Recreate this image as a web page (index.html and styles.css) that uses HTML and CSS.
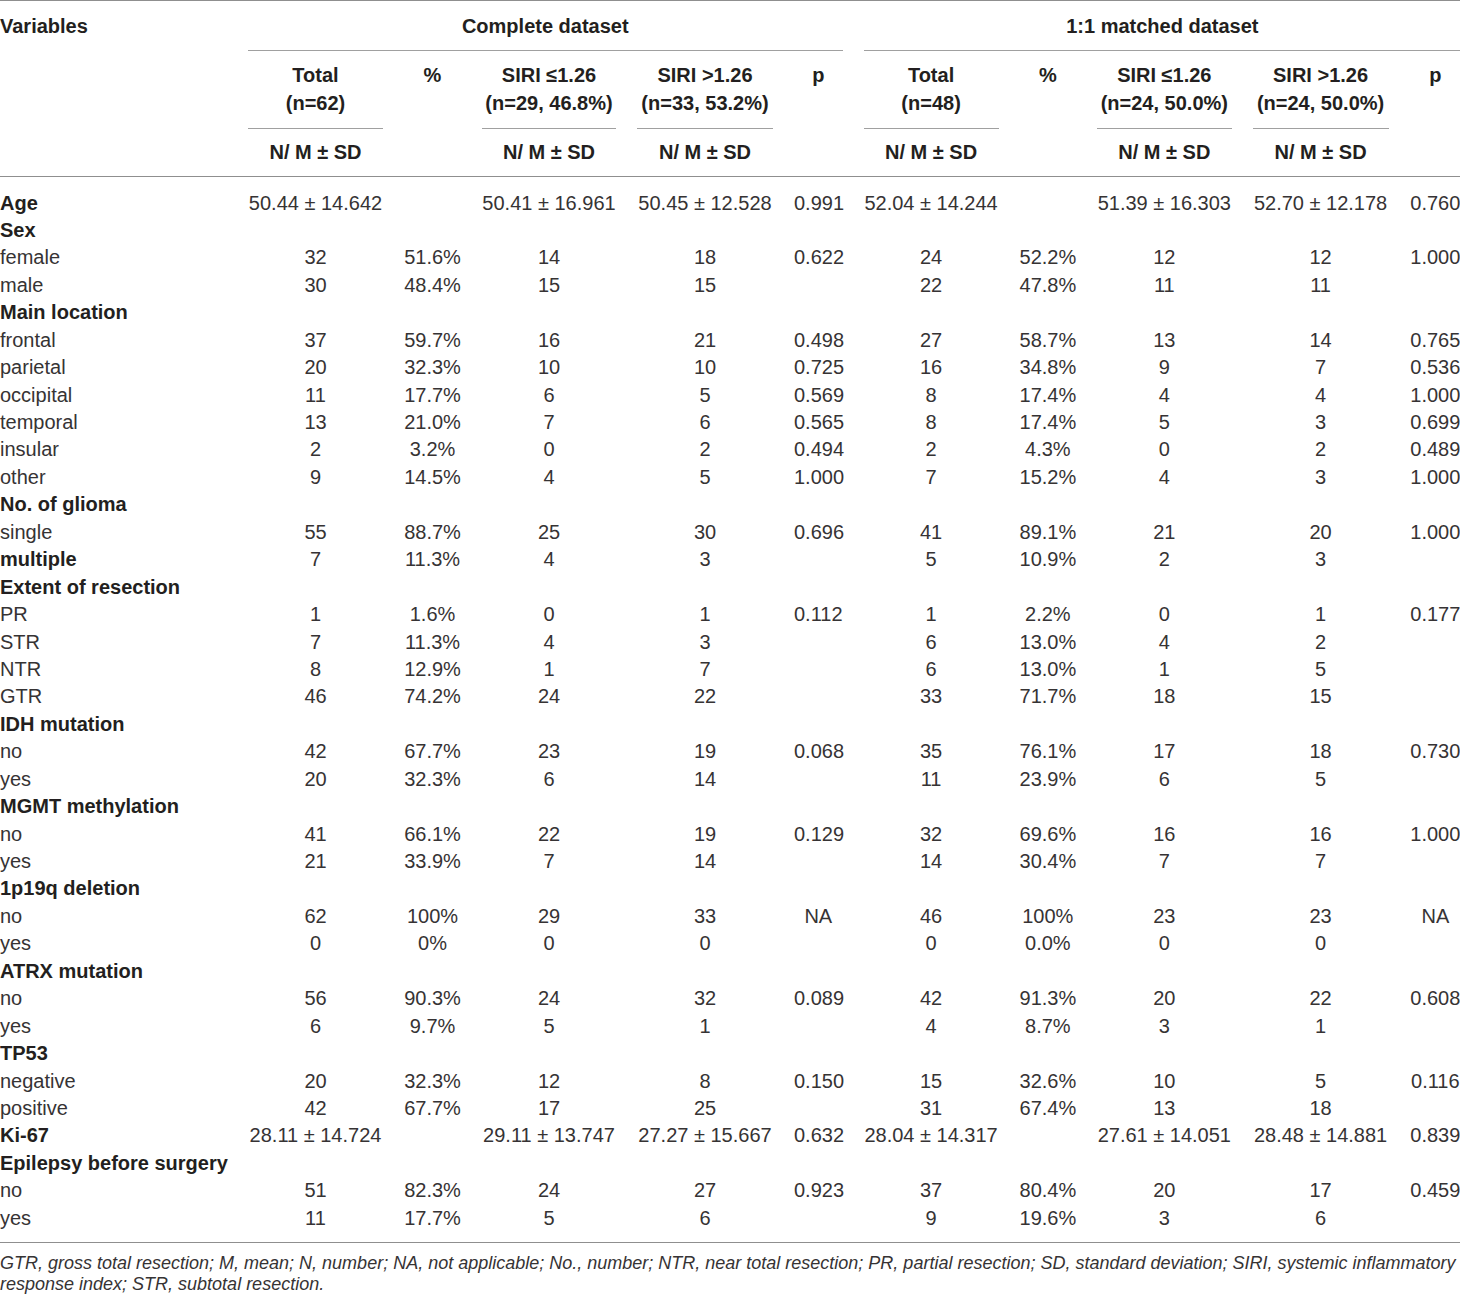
FILE: index.html
```html
<!DOCTYPE html>
<html lang="en">
<head>
<meta charset="utf-8">
<title>SIRI table</title>
<link rel="stylesheet" href="styles.css">
</head>
<body>
<table class="tbl">
  <colgroup>
    <col class="c-var">
    <col class="c-n">
    <col class="c-pct">
    <col class="c-siri1">
    <col class="c-siri2">
    <col class="c-p">
    <col class="c-n">
    <col class="c-pct2">
    <col class="c-siri3">
    <col class="c-siri2">
    <col class="c-p2">
  </colgroup>
  <thead>
    <tr class="h1">
      <th class="var">Variables</th>
      <th colspan="5"><div class="rule">Complete dataset</div></th>
      <th colspan="5"><div class="rule">1:1 matched dataset</div></th>
    </tr>
    <tr class="h2">
      <th></th>
      <th><div class="rule">Total<br>(n=62)</div></th>
      <th>%</th>
      <th><div class="rule">SIRI ≤1.26<br>(n=29, 46.8%)</div></th>
      <th><div class="rule">SIRI &gt;1.26<br>(n=33, 53.2%)</div></th>
      <th>p</th>
      <th><div class="rule">Total<br>(n=48)</div></th>
      <th>%</th>
      <th><div class="rule">SIRI ≤1.26<br>(n=24, 50.0%)</div></th>
      <th><div class="rule">SIRI &gt;1.26<br>(n=24, 50.0%)</div></th>
      <th>p</th>
    </tr>
    <tr class="h3">
      <th></th>
      <th>N/ M ± SD</th>
      <th></th>
      <th>N/ M ± SD</th>
      <th>N/ M ± SD</th>
      <th></th>
      <th>N/ M ± SD</th>
      <th></th>
      <th>N/ M ± SD</th>
      <th>N/ M ± SD</th>
      <th></th>
    </tr>
  </thead>
  <tbody>
    <tr><td class="var b">Age</td><td>50.44 ± 14.642</td><td></td><td>50.41 ± 16.961</td><td>50.45 ± 12.528</td><td>0.991</td><td>52.04 ± 14.244</td><td></td><td>51.39 ± 16.303</td><td>52.70 ± 12.178</td><td>0.760</td></tr>
    <tr><td class="var b">Sex</td><td></td><td></td><td></td><td></td><td></td><td></td><td></td><td></td><td></td><td></td></tr>
    <tr><td class="var">female</td><td>32</td><td>51.6%</td><td>14</td><td>18</td><td>0.622</td><td>24</td><td>52.2%</td><td>12</td><td>12</td><td>1.000</td></tr>
    <tr><td class="var">male</td><td>30</td><td>48.4%</td><td>15</td><td>15</td><td></td><td>22</td><td>47.8%</td><td>11</td><td>11</td><td></td></tr>
    <tr><td class="var b">Main location</td><td></td><td></td><td></td><td></td><td></td><td></td><td></td><td></td><td></td><td></td></tr>
    <tr><td class="var">frontal</td><td>37</td><td>59.7%</td><td>16</td><td>21</td><td>0.498</td><td>27</td><td>58.7%</td><td>13</td><td>14</td><td>0.765</td></tr>
    <tr><td class="var">parietal</td><td>20</td><td>32.3%</td><td>10</td><td>10</td><td>0.725</td><td>16</td><td>34.8%</td><td>9</td><td>7</td><td>0.536</td></tr>
    <tr><td class="var">occipital</td><td>11</td><td>17.7%</td><td>6</td><td>5</td><td>0.569</td><td>8</td><td>17.4%</td><td>4</td><td>4</td><td>1.000</td></tr>
    <tr><td class="var">temporal</td><td>13</td><td>21.0%</td><td>7</td><td>6</td><td>0.565</td><td>8</td><td>17.4%</td><td>5</td><td>3</td><td>0.699</td></tr>
    <tr><td class="var">insular</td><td>2</td><td>3.2%</td><td>0</td><td>2</td><td>0.494</td><td>2</td><td>4.3%</td><td>0</td><td>2</td><td>0.489</td></tr>
    <tr><td class="var">other</td><td>9</td><td>14.5%</td><td>4</td><td>5</td><td>1.000</td><td>7</td><td>15.2%</td><td>4</td><td>3</td><td>1.000</td></tr>
    <tr><td class="var b">No. of glioma</td><td></td><td></td><td></td><td></td><td></td><td></td><td></td><td></td><td></td><td></td></tr>
    <tr><td class="var">single</td><td>55</td><td>88.7%</td><td>25</td><td>30</td><td>0.696</td><td>41</td><td>89.1%</td><td>21</td><td>20</td><td>1.000</td></tr>
    <tr><td class="var b">multiple</td><td>7</td><td>11.3%</td><td>4</td><td>3</td><td></td><td>5</td><td>10.9%</td><td>2</td><td>3</td><td></td></tr>
    <tr><td class="var b">Extent of resection</td><td></td><td></td><td></td><td></td><td></td><td></td><td></td><td></td><td></td><td></td></tr>
    <tr><td class="var">PR</td><td>1</td><td>1.6%</td><td>0</td><td>1</td><td>0.112</td><td>1</td><td>2.2%</td><td>0</td><td>1</td><td>0.177</td></tr>
    <tr><td class="var">STR</td><td>7</td><td>11.3%</td><td>4</td><td>3</td><td></td><td>6</td><td>13.0%</td><td>4</td><td>2</td><td></td></tr>
    <tr><td class="var">NTR</td><td>8</td><td>12.9%</td><td>1</td><td>7</td><td></td><td>6</td><td>13.0%</td><td>1</td><td>5</td><td></td></tr>
    <tr><td class="var">GTR</td><td>46</td><td>74.2%</td><td>24</td><td>22</td><td></td><td>33</td><td>71.7%</td><td>18</td><td>15</td><td></td></tr>
    <tr><td class="var b">IDH mutation</td><td></td><td></td><td></td><td></td><td></td><td></td><td></td><td></td><td></td><td></td></tr>
    <tr><td class="var">no</td><td>42</td><td>67.7%</td><td>23</td><td>19</td><td>0.068</td><td>35</td><td>76.1%</td><td>17</td><td>18</td><td>0.730</td></tr>
    <tr><td class="var">yes</td><td>20</td><td>32.3%</td><td>6</td><td>14</td><td></td><td>11</td><td>23.9%</td><td>6</td><td>5</td><td></td></tr>
    <tr><td class="var b">MGMT methylation</td><td></td><td></td><td></td><td></td><td></td><td></td><td></td><td></td><td></td><td></td></tr>
    <tr><td class="var">no</td><td>41</td><td>66.1%</td><td>22</td><td>19</td><td>0.129</td><td>32</td><td>69.6%</td><td>16</td><td>16</td><td>1.000</td></tr>
    <tr><td class="var">yes</td><td>21</td><td>33.9%</td><td>7</td><td>14</td><td></td><td>14</td><td>30.4%</td><td>7</td><td>7</td><td></td></tr>
    <tr><td class="var b">1p19q deletion</td><td></td><td></td><td></td><td></td><td></td><td></td><td></td><td></td><td></td><td></td></tr>
    <tr><td class="var">no</td><td>62</td><td>100%</td><td>29</td><td>33</td><td>NA</td><td>46</td><td>100%</td><td>23</td><td>23</td><td>NA</td></tr>
    <tr><td class="var">yes</td><td>0</td><td>0%</td><td>0</td><td>0</td><td></td><td>0</td><td>0.0%</td><td>0</td><td>0</td><td></td></tr>
    <tr><td class="var b">ATRX mutation</td><td></td><td></td><td></td><td></td><td></td><td></td><td></td><td></td><td></td><td></td></tr>
    <tr><td class="var">no</td><td>56</td><td>90.3%</td><td>24</td><td>32</td><td>0.089</td><td>42</td><td>91.3%</td><td>20</td><td>22</td><td>0.608</td></tr>
    <tr><td class="var">yes</td><td>6</td><td>9.7%</td><td>5</td><td>1</td><td></td><td>4</td><td>8.7%</td><td>3</td><td>1</td><td></td></tr>
    <tr><td class="var b">TP53</td><td></td><td></td><td></td><td></td><td></td><td></td><td></td><td></td><td></td><td></td></tr>
    <tr><td class="var">negative</td><td>20</td><td>32.3%</td><td>12</td><td>8</td><td>0.150</td><td>15</td><td>32.6%</td><td>10</td><td>5</td><td>0.116</td></tr>
    <tr><td class="var">positive</td><td>42</td><td>67.7%</td><td>17</td><td>25</td><td></td><td>31</td><td>67.4%</td><td>13</td><td>18</td><td></td></tr>
    <tr><td class="var b">Ki-67</td><td>28.11 ± 14.724</td><td></td><td>29.11 ± 13.747</td><td>27.27 ± 15.667</td><td>0.632</td><td>28.04 ± 14.317</td><td></td><td>27.61 ± 14.051</td><td>28.48 ± 14.881</td><td>0.839</td></tr>
    <tr><td class="var b">Epilepsy before surgery</td><td></td><td></td><td></td><td></td><td></td><td></td><td></td><td></td><td></td><td></td></tr>
    <tr><td class="var">no</td><td>51</td><td>82.3%</td><td>24</td><td>27</td><td>0.923</td><td>37</td><td>80.4%</td><td>20</td><td>17</td><td>0.459</td></tr>
    <tr><td class="var">yes</td><td>11</td><td>17.7%</td><td>5</td><td>6</td><td></td><td>9</td><td>19.6%</td><td>3</td><td>6</td><td></td></tr>
  </tbody>
</table>
<p class="note">GTR, gross total resection; M, mean; N, number; NA, not applicable; No., number; NTR, near total resection; PR, partial resection; SD, standard deviation; SIRI, systemic inflammatory response index; STR, subtotal resection.</p>
</body>
</html>
```

FILE: styles.css
```css
html, body {
  margin: 0;
  padding: 0;
  background: #ffffff;
}

body {
  width: 1460px;
  font-family: "Liberation Sans", Arial, sans-serif;
  color: #363334;
}

.tbl {
  width: 1460px;
  table-layout: fixed;
  border-collapse: collapse;
  border-top: 1px solid #8f8f8f;
  border-bottom: 1px solid #8f8f8f;
  font-size: 20px;
}

.c-var { width: 237.5px; }
.c-n { width: 156px; }
.c-pct { width: 78px; }
.c-siri1 { width: 155px; }
.c-siri2 { width: 157px; }
.c-p { width: 69.5px; }
.c-pct2 { width: 77.5px; }
.c-siri3 { width: 155.5px; }
.c-p2 { width: 62px; }

.tbl th,
.tbl td {
  padding: 0 10.5px;
  text-align: center;
  vertical-align: top;
  line-height: 27.43px;
  white-space: nowrap;
}

.tbl th {
  font-weight: bold;
  color: #231f20;
}

.tbl th:first-child,
.tbl td:first-child {
  padding-left: 0;
  text-align: left;
}

.tbl th:last-child,
.tbl td:last-child {
  padding-right: 0;
}

.tbl .var {
  padding-left: 1px;
}

.rule {
  border-bottom: 1px solid #a0a0a0;
}

.h1 th {
  padding-top: 12px;
}

.h1 .rule {
  padding-bottom: 10px;
}

.h2 th {
  padding-top: 11px;
}

.h2 .rule {
  padding-bottom: 10.5px;
}

.h3 th {
  padding-top: 10px;
  padding-bottom: 10px;
  border-bottom: 1px solid #8f8f8f;
}

.tbl td.b {
  font-weight: bold;
  color: #231f20;
}

.tbl tbody tr:first-child td {
  padding-top: 12.3px;
}

.tbl tbody tr:last-child td {
  padding-bottom: 10px;
}

.note {
  margin: 9.5px 0 0 0;
  font-style: italic;
  font-size: 18px;
  line-height: 21px;
  color: #363334;
}
```
